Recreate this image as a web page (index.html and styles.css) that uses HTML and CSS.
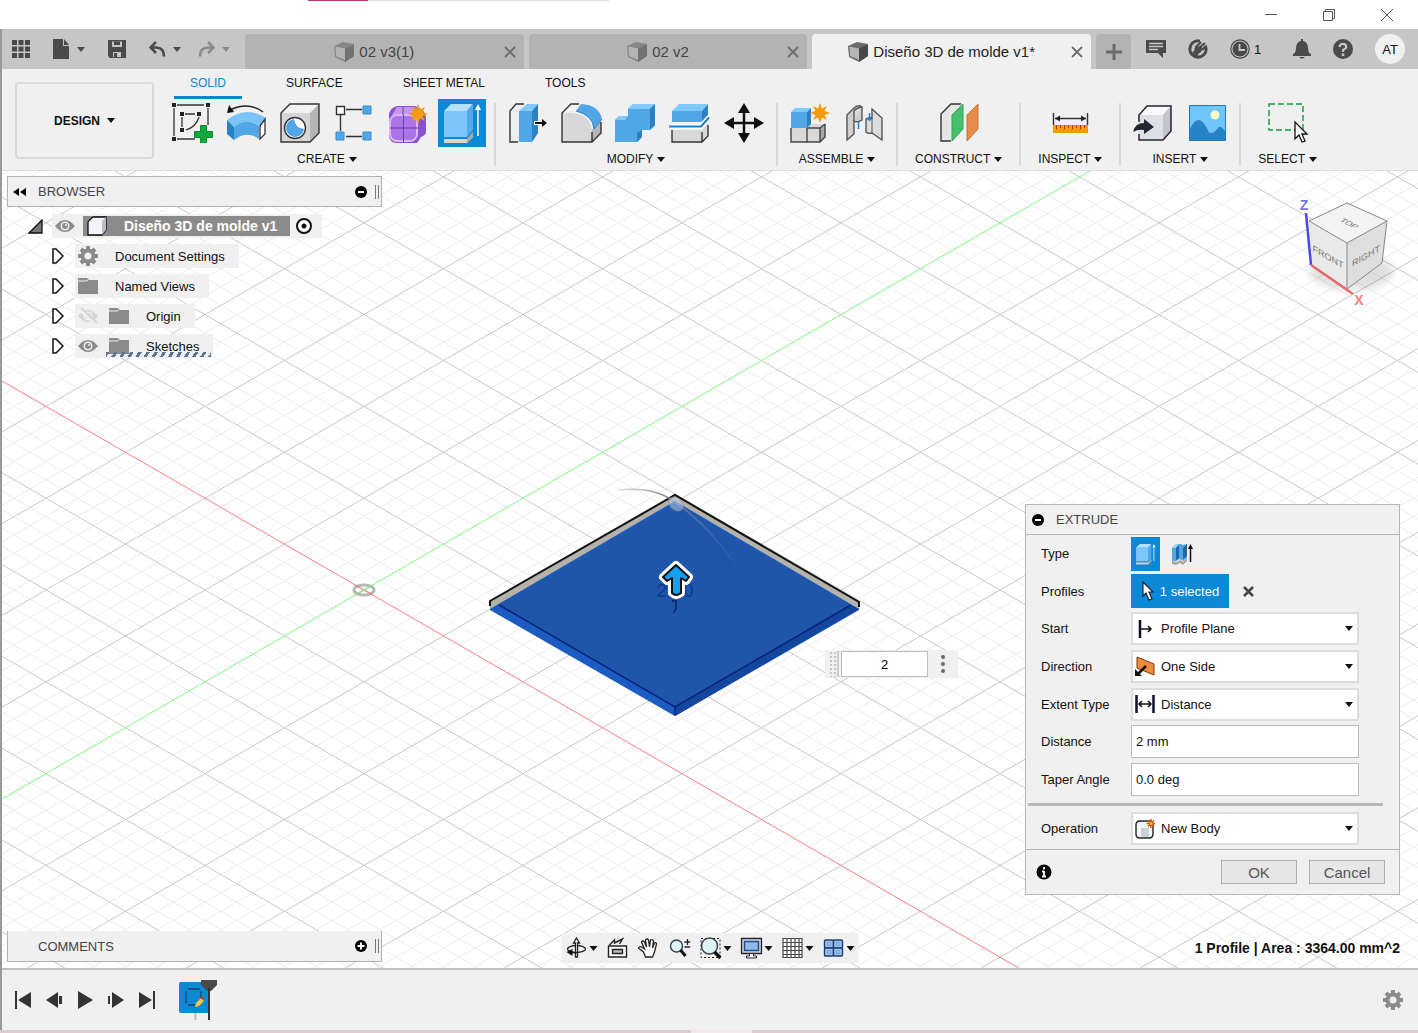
FILE: index.html
```html
<!DOCTYPE html>
<html lang="en">
  <head>
    <meta charset="utf-8">
    <meta name="viewport" content="width=device-width, initial-scale=1">
    <title>Diseño 3D de molde v1*</title>
    <link rel="stylesheet" href="styles.css">
  </head>
  <body>
    <svg class="defs" width="0" height="0">
      <symbol id="cube" viewBox="0 0 20 20">
        <path d="M0 4 9 0l11 2v12l-9 6L1 15z" fill="#6b6b6b"/>
        <path d="M1.500 4.500 11 6.500V18L2 14z" fill="#b4b4b4"/>
        <path d="m11 6.500 9-4V14l-9 6z" fill="#484848"/>
      </symbol>
      <symbol id="eye" viewBox="0 0 20 20">
        <path d="M0 10q10-12 20 0-10 12-20 0z" fill="#8b8b8b"/>
        <circle cx="10" cy="10" r="4.500" fill="#f0f0f0"/>
        <circle cx="10" cy="10" r="3" fill="#8b8b8b"/>
        <circle cx="11" cy="9" r="1" fill="#f0f0f0"/>
      </symbol>
      <symbol id="folder" viewBox="0 0 20 20">
        <path d="M0 2h9l2 2h9v14H0z" fill="#8b8b8b"/>
        <path d="M0 5h8l2-1" fill="none" stroke="#f0f0f0"/>
      </symbol>
      <symbol id="gear" viewBox="0 0 20 20">
        <path d="M10 0v20M0 10h20M3 3l14 14M17 3 3 17" stroke="#8b8b8b" stroke-width="4"/>
        <circle cx="10" cy="10" r="5.500" fill="none" stroke="#8b8b8b" stroke-width="4"/>
        <circle cx="10" cy="10" r="3.500" fill="#f0f0f0"/>
      </symbol>
      <symbol id="close" viewBox="0 0 12 12">
        <path d="m1 1 10 10M11 1 1 11" fill="none" stroke="#6e6e6e" stroke-width="1.800"/>
      </symbol>
      <symbol id="expand" viewBox="0 0 12 18">
        <path d="M1 2h3l7 7-7 7H1z" fill="#fff" stroke="#111" stroke-width="1.500"/>
      </symbol>
      <symbol id="star" viewBox="-10 -10 20 20">
        <path d="m0-10 2 5.500 5-2.500-2.500 5L10 0 4.500 2 7 7 2 4.500 0 10l-2-5.500L-7 7l2.500-5L-10 0l5.500-2L-7-7l5 2.500z" fill="#f59a0c"/>
      </symbol>
      <symbol id="extrude" viewBox="0 0 40 40">
        <path d="M2 36h23l6-7v5l-6 6H2z" fill="#d8d4cc"/>
        <path d="m25 40 6-6v-5l-6 7z" fill="#aaa69e"/>
        <path d="m2 8 7-7h22l-6 7z" fill="#b4e0ff"/>
        <path d="M2 8h23v26H2z" fill="#7cc6fb"/>
        <path d="m25 8 6-7v26l-6 7z" fill="#53a9e8"/>
        <path d="M36 33V5" stroke="#fff" stroke-width="1.500"/>
        <path d="m33 7 3-6 3 6z" fill="#fff"/>
      </symbol>
    </svg>

    <div class="titlebar">
      <div class="progress"><span></span></div>
      <button aria-label="Minimize"><svg width="12" height="12"><path d="M0 5.500h12" stroke="#555"/></svg></button>
      <button aria-label="Restore"><svg width="12" height="12"><path d="M.5 2.500h9v9h-9zM2.500 2V.500h9v9H10" fill="none" stroke="#555"/></svg></button>
      <button aria-label="Close"><svg width="12" height="12"><path d="m0 0 12 12M12 0 0 12" stroke="#555"/></svg></button>
    </div>

    <div class="app">
      <header class="appbar">
        <div class="quick">
          <button aria-label="Data panel"><svg width="18" height="18" fill="#4a4a4a"><path d="M0 0h5v5H0zM6.500 0h5v5h-5zM13 0h5v5h-5zM0 6.500h5v5H0zM6.500 6.500h5v5h-5zM13 6.500h5v5h-5zM0 13h5v5H0zM6.500 13h5v5h-5zM13 13h5v5h-5z"/></svg></button>
          <button class="menu" aria-label="File"><svg width="18" height="20" fill="#4a4a4a"><path d="M0 0h10v7h6v13H0z"/><path d="m11 0 5 6h-5z"/></svg><i class="caret"></i></button>
          <button aria-label="Save"><svg width="18" height="18"><path d="M0 0h18v18H2l-2-2z" fill="#4a4a4a"/><path d="M4 1.500h10V7H4zM5 12h8v5H5z" fill="#c6c6c6"/><path d="M6 1.500h6V5H6zM6 13h3v4H6z" fill="#4a4a4a"/></svg></button>
          <button class="menu" aria-label="Undo"><svg width="18" height="18" fill="none" stroke="#4a4a4a" stroke-width="2.500"><path d="M7 2 1.500 7.500 7 13M2 7.500h5q8 0 8 9"/></svg><i class="caret"></i></button>
          <button class="menu off" aria-label="Redo"><svg width="18" height="18" fill="none" stroke="#8a8a8a" stroke-width="2.500"><path d="m10 2 5.500 5.500L10 13M15 7.500h-5q-8 0-8 9"/></svg><i class="caret"></i></button>
        </div>
        <div class="docs">
          <div class="doc"><a href="#"><svg class="dim" width="20" height="20"><use href="#cube"/></svg>02 v3(1)</a><button aria-label="Close 02 v3(1)"><svg width="12" height="12"><use href="#close"/></svg></button></div>
          <div class="doc"><a href="#"><svg class="dim" width="20" height="20"><use href="#cube"/></svg>02 v2</a><button aria-label="Close 02 v2"><svg width="12" height="12"><use href="#close"/></svg></button></div>
          <div class="doc active"><a href="#"><svg width="20" height="20"><use href="#cube"/></svg>Diseño 3D de molde v1*</a><button aria-label="Close document"><svg width="12" height="12"><use href="#close"/></svg></button></div>
          <button class="new-doc" aria-label="New document"><svg width="16" height="16"><path d="M8 0v16M0 8h16" stroke="#6a6a6a" stroke-width="3"/></svg></button>
        </div>
        <div class="account">
          <button aria-label="Comments"><svg width="20" height="20"><path d="M0 1h20v13h-3v5l-5-5H0z" fill="#4a4a4a"/><path d="M3 4.500h14M3 7.500h14M3 10.500h9" stroke="#c6c6c6" stroke-width="1.500"/></svg></button>
          <button aria-label="Extensions"><svg width="20" height="20"><circle cx="10" cy="10" r="8.200" fill="none" stroke="#4a4a4a" stroke-width="3"/><path d="M12 0h5l3 4-3 3-5-3z" fill="#c6c6c6"/><path d="m8 8 5-5M11 9l6-5M13 11l5-3" stroke="#4a4a4a" stroke-width="2.200"/><path d="m7 7 7 1-1 5-3 2-4-1z" fill="#4a4a4a"/><path d="m6 12 3 5" stroke="#4a4a4a" stroke-width="4"/></svg></button>
          <button class="jobs" aria-label="Job status"><svg width="20" height="20"><circle cx="10" cy="10" r="9.200" fill="none" stroke="#4a4a4a" stroke-width="1.200"/><circle cx="10" cy="10" r="7.500" fill="#4a4a4a"/><path d="M9.500 5v6H15" fill="none" stroke="#c6c6c6" stroke-width="1.800"/></svg><span>1</span></button>
          <button aria-label="Notifications"><svg width="18" height="20" fill="#4a4a4a"><path d="M8 0h2v2q5 1 5 7 0 5 3 6v2H0v-2q3-1 3-6 0-6 5-7z"/><path d="M6 18h6q-3 3-6 0z"/></svg></button>
          <button aria-label="Help"><svg width="20" height="20"><circle cx="10" cy="10" r="10" fill="#4a4a4a"/><path d="M6.500 8Q7 4.800 10 4.800T13.300 8Q13.300 9.500 10 11v2" fill="none" stroke="#c6c6c6" stroke-width="2.200"/><path d="M8.800 14.500h2.500V17H8.800z" fill="#c6c6c6"/></svg></button>
          <button class="avatar">AT</button>
        </div>
      </header>

      <div class="toolbar">
        <button class="workspace">DESIGN<i class="caret"></i></button>
        <div class="ribbon">
          <nav class="tabs">
            <a href="#" class="active">SOLID</a>
            <a href="#">SURFACE</a>
            <a href="#">SHEET METAL</a>
            <a href="#">TOOLS</a>
          </nav>
          <div class="groups">
            <section class="group">
              <div class="icons">
                <button aria-label="Create sketch"><svg width="42" height="40"><path d="M6 2h27M3 5v28M6 36h18M37 5v17M14 11h10M11 14v10M28 14q-3 10-13 13" fill="none" stroke="#333" stroke-width="1.300"/><path d="M1 0h4v4H1zM35 0h4v4h-4zM1 34h4v4H1zM9 9h4v4H9zM26 9h4v4h-4zM9 25h4v4H9z" fill="#222"/><path d="M29.500 22.500h6v6h6v6h-6v6h-6v-6h-6v-6h6z" fill="#12a83c" stroke="#0b8a2e"/></svg></button>
                <button aria-label="Revolve"><svg width="40" height="40"><path d="M1 17Q20 2 40 15l-7 8q-13-9-25 1z" fill="#79c4f8"/><path d="m1 17 7 7v13l-7-6z" fill="#2b80c2"/><path d="M8 24q12-10 25-1v13q-12-9-25 1z" fill="#51a6e6"/><path d="m34 23 5-7v15l-5 5z" fill="#fff" stroke="#333" stroke-width="1.300"/><path d="M37 9Q22-2 4 7" fill="none" stroke="#222" stroke-width="1.500"/><path d="m1 10 2-8 5 7z" fill="#111"/></svg></button>
                <button aria-label="Hole"><svg width="42" height="42"><path d="m2 11 9-9h29l-9 9z" fill="#f2f2f2"/><path d="m31 11 9-9v29l-9 9z" fill="#b5b5b5"/><path d="M2 11h29v29H2z" fill="#d6d6d6"/><path d="m2 11 9-9h29v29l-9 9H2z" fill="none" stroke="#333" stroke-width="1.400"/><circle cx="16" cy="26" r="10.500" fill="#fff" stroke="#333" stroke-width="1.400"/><path d="M15 17q1 9 10 10a9 9 0 1 1-10-10z" fill="#51a6e6"/></svg></button>
                <button aria-label="Pattern"><svg width="40" height="40"><path d="M12 6.500h16M12 33.500h16M6.500 12v16" stroke="#333" stroke-width="1.400"/><path d="M2.500 3.500h8v8h-8z" fill="#fff" stroke="#333" stroke-width="1.400"/><path d="M29 3h8v8h-8zM2 29h8v8H2zM29 29h8v8h-8z" fill="#51a6e6" stroke="#3b8ccb"/></svg></button>
                <button aria-label="Create form"><svg width="40" height="40"><path d="M9 3h18q10 3 11 12v14q0 3-5 5l-4 6H8q-7-1-7-8V11q1-6 8-8z" fill="#8a52d0"/><path d="M9 4h18l3 8H4z" fill="#c496f5"/><rect x="2" y="12" width="27" height="26" rx="7" fill="#aa74e6" stroke="#d9b8fb" stroke-width="2"/><path d="M15.500 12v27M2 25h28M15 4v8" stroke="#6f3bb0" fill="none"/><use href="#star" x="20" y="1" width="20" height="20"/></svg></button>
                <button class="on" aria-label="Extrude"><svg width="40" height="42"><use href="#extrude" width="40" height="42"/></svg></button>
              </div>
              <button class="label">CREATE<i class="caret"></i></button>
            </section>
            <span class="divider"></span>
            <section class="group">
              <div class="icons">
                <button aria-label="Press pull"><svg width="40" height="42"><path d="m2 9 5-7h13L11 9v31H2z" fill="#eee"/><path d="M16 2H8L2 9v31h8" fill="none" stroke="#333" stroke-width="1.400"/><path d="m11 9 8-7h11l-6 7z" fill="#82caf9"/><path d="M11 9h13v31H11z" fill="#51a6e6"/><path d="m24 9 6-7v29l-6 9z" fill="#2b80c2"/><path d="M26 21h9" stroke="#fff" stroke-width="4"/><path d="M27 21h8" stroke="#111" stroke-width="2"/><path d="m34 17 5 4-5 4z" fill="#111"/></svg></button>
                <button aria-label="Fillet"><svg width="42" height="42"><path d="M1 11q28-2 30 17v12H1z" fill="#d8d8d8"/><path d="m1 11 9-9h9l-5 6z" fill="#f5f5f5"/><path d="m31 28 9-9v12l-9 9z" fill="#b5b5b5"/><path d="M18 2H10l-9 9v29h30l9-9V20M31 30v10" fill="none" stroke="#333" stroke-width="1.400"/><path d="m15 9 5-7q18 1 21 15l-8 10Q32 13 15 9z" fill="#51a6e6"/><path d="M15 9q17 4 18 18l8-10" fill="none" stroke="#2b80c2"/></svg></button>
                <button aria-label="Combine"><svg width="42" height="42"><path d="m0 18 4-4h9V7l5-5h22v21l-5 5h-8v7l-5 5H0z" fill="#51a6e6"/><path d="m13 7 5-5h22l-5 5zM0 18l4-4h9l-3 4z" fill="#82caf9"/><path d="m35 7 5-5v21l-5 5zM22 31l5-3v7l-5 5z" fill="#2b80c2"/></svg></button>
                <button aria-label="Split body"><svg width="42" height="42"><path d="m3 9 7-7h29l-6 7z" fill="#82caf9"/><path d="M3 9h30v11H3z" fill="#51a6e6"/><path d="m33 9 6-7v11l-6 7z" fill="#2b80c2"/><path d="M3 28h30l6-7v12l-6 7H3z" fill="#d8d8d8"/><path d="M3 28v12h30l6-6V23M33 30v10" fill="none" stroke="#333" stroke-width="1.400"/><path d="M1 24.500h31l8-9" fill="none" stroke="#fff" stroke-width="5"/><path d="M0 24.500h32l8-9" fill="none" stroke="#1c7fc8" stroke-width="2"/></svg></button>
                <button aria-label="Move"><svg width="40" height="42"><path d="M20 5v32M4 21h32" stroke="#111" stroke-width="2.500"/><path d="m20 1 6 10H14zM20 41l6-10H14zM0 21l10-6v12zM40 21l-10-6v12z" fill="#111"/></svg></button>
              </div>
              <button class="label">MODIFY<i class="caret"></i></button>
            </section>
            <span class="divider"></span>
            <section class="group">
              <div class="icons">
                <button aria-label="New component"><svg width="42" height="42"><path d="M2 26h16l4-4h14v13l-5 5H2z" fill="#d8d8d8"/><path d="m31 26 5-4v13l-5 5z" fill="#aaa"/><path d="M2 26v14h29l5-5V22M18 26v14M18 26h13v14M31 26l5-4" fill="none" stroke="#444" stroke-width="1.400"/><path d="m2 10 4-4h16l-4 4z" fill="#82caf9"/><path d="M2 10h16v16H2z" fill="#51a6e6"/><path d="m18 10 4-4v16l-4 4z" fill="#2b80c2"/><use href="#star" x="21" y="1" width="20" height="20"/></svg></button>
                <button aria-label="Joint"><svg width="40" height="42"><path d="M3 13 10 6q4-4 8-1v13q-5 3-8 1v13l-7 6z" fill="#cfcfcf" stroke="#555" stroke-width="1.400"/><path d="M10 19V9q2-3 8-4M22 17q2-2 6-1V7l10 9v22l-10-7q-4 1-6-1z" fill="#dcdcdc" stroke="#555" stroke-width="1.400"/><path d="M28 16v15" stroke="#555"/><path d="M14.500 19v8M25.500 11v8M23 17h5" stroke="#1c7fc8" stroke-width="1.500"/></svg></button>
              </div>
              <button class="label">ASSEMBLE<i class="caret"></i></button>
            </section>
            <span class="divider"></span>
            <section class="group">
              <div class="icons">
                <button aria-label="Offset plane"><svg width="40" height="42"><path d="M2 12 12 2h12L13 13v26H2z" fill="#e6e6e6"/><path d="M22 2H12L2 12v27h10" fill="none" stroke="#333" stroke-width="1.400"/><path d="M13 13 24 2v25L13 39z" fill="#45c06c" stroke="#2da455"/><path d="M28 13 39 2v25L28 39z" fill="#e58b4c" stroke="#ca7034"/></svg></button>
              </div>
              <button class="label">CONSTRUCT<i class="caret"></i></button>
            </section>
            <span class="divider"></span>
            <section class="group">
              <div class="icons">
                <button aria-label="Measure"><svg width="40" height="40"><path d="M3.500 10v12M37.500 10v12M5 15.500h31" stroke="#333" stroke-width="1.400"/><path d="m5 15.500 5-3v6zM36 15.500l-5-3v6z" fill="#222"/><path d="M3 22h35v8H3z" fill="#f59a0c"/><path d="M6.500 22v4M10.500 22v3M14.500 22v4M18.500 22v3M22.500 22v4M26.500 22v3M30.500 22v4M34.500 22v3" stroke="#7a4a00"/></svg></button>
              </div>
              <button class="label">INSPECT<i class="caret"></i></button>
            </section>
            <span class="divider"></span>
            <section class="group">
              <div class="icons">
                <button aria-label="Insert derive"><svg width="42" height="40"><path d="m7 12 8-9h24v25l-8 9H7z" fill="#dfe0e6"/><path d="m7 12 8-9h24l-8 9z" fill="#f9f9fb"/><path d="m31 12 8-9v25l-8 9z" fill="#c2c3cb"/><path d="M7 19v-7l8-9h24v25l-8 9H7v-6" fill="none" stroke="#222631" stroke-width="1.500"/><path d="M1 29q2-9 11-9v-4l10 8-10 7v-4q-6-1-11 2z" fill="#222631"/></svg></button>
                <button aria-label="Insert canvas"><svg width="40" height="40"><path d="M2.500 2.500h36v35h-36z" fill="#72c5fb"/><path d="M3 26q4-9 9-9 4 0 10 12 2 2 5 0l5-5q2-1 6 4v9H3z" fill="#2583c6"/><circle cx="28" cy="12" r="4.500" fill="#fffbd0"/><path d="M2.500 2.500h36v35h-36z" fill="none" stroke="#1d77ba"/></svg></button>
              </div>
              <button class="label">INSERT<i class="caret"></i></button>
            </section>
            <span class="divider"></span>
            <section class="group">
              <div class="icons">
                <button aria-label="Select"><svg width="42" height="42"><path d="M2 2h34v26H2z" fill="none" stroke="#0e9b37" stroke-width="1.400" stroke-dasharray="6 3"/><path d="M28 20v17l4-4 3 7 3-1-3-7h5z" fill="#fff" stroke="#111" stroke-width="1.300"/></svg></button>
              </div>
              <button class="label">SELECT<i class="caret"></i></button>
            </section>
          </div>
        </div>
      </div>

      <main class="viewport">
        <svg class="scene">
          <g transform="translate(362 419)">
            <path id="grid-minor"/>
            <path id="grid-major"/>
            <ellipse rx="10" ry="5" fill="none" stroke="#888" stroke-opacity=".6" stroke-width="3"/>
            <path d="M-9-5 9 5M-9 5 9-5" stroke="#999" stroke-opacity=".5" stroke-width="2"/>
            <path id="axis-x"/>
            <path id="axis-y"/>
          </g>
          <g transform="translate(673 323)">
            <path d="m0 0-185 107v8L0 222l184-107v-8z" fill="#b5b2aa"/>
            <path d="M-185 115 0 7l184 108v1L0 222l-185-106z" fill="#1c5bc2"/>
            <path d="M-176 111 0 9l176 102L0 213z" fill="#1f56aa"/>
            <path d="M0 213v9l184-107-8-4z" fill="#14469d"/>
            <path d="M-176 111 0 213l176-102M0 213v8" fill="none" stroke="#04237a" stroke-width="1.500"/>
            <path d="M-185 112v-5L0 1l184 107v5" fill="none" stroke="#111" stroke-width="2"/>
            <path d="M-57-4q36-4 57 12 40 28 70 78" fill="none" stroke="url(#fade)" stroke-width="1.500"/>
            <ellipse cx="1" cy="10" rx="8" ry="6" transform="rotate(40 1 10)" fill="#b9d0ee" fill-opacity=".5" stroke="#888" stroke-opacity=".6"/>
            <text x="0" y="103" text-anchor="middle" class="dim-text">2.00</text>
            <path d="M-3 107h4v8l-3 4" fill="none" stroke="#0d2f80" stroke-width="2"/>
            <path d="m1 71 13 12-3 4-5-3v15q-5 4-9 0V84l-5 3-4-4z" fill="#fff" stroke="#fff" stroke-width="8" stroke-linejoin="round"/>
            <path d="m1 71 13 12-3 4-5-3v15q-5 4-9 0V84l-5 3-4-4z" fill="#12a1ee" stroke="#111" stroke-width="2" stroke-linejoin="round"/>
          </g>
          <linearGradient id="fade">
            <stop offset="0" stop-color="#999" stop-opacity=".3"/>
            <stop offset=".4" stop-color="#888"/>
            <stop offset="1" stop-color="#4a77bb" stop-opacity="0"/>
          </linearGradient>
        </svg>

        <svg class="viewcube" width="110" height="122">
          <ellipse cx="62" cy="82" rx="42" ry="18" fill="#000" opacity=".12" class="soft"/>
          <path d="m57 13 40 18-40 22-38-22z" fill="#f3f3f3"/>
          <path d="m19 31 38 22v46L22 75z" fill="#e9e9e9"/>
          <path d="m97 31-40 22v46l35-26z" fill="#dedede"/>
          <path d="m57 13 40 18-40 22-38-22zM57 53v46l35-26 5-42M57 99 22 75" fill="none" stroke="#888"/>
          <path d="m16 23 5 52" stroke="#4a48e0" stroke-width="2.500"/>
          <path d="m21 75 42 29" stroke="#ea6868" stroke-width="2.500"/>
          <text transform="translate(57 35) matrix(.87 .45 -.7 .5 0 0)">TOP</text>
          <text transform="translate(38 70) skewY(30)">FRONT</text>
          <text transform="translate(76 69) skewY(-30)">RIGHT</text>
          <text x="14" y="20" class="axis z">Z</text>
          <text x="69" y="115" class="axis x">X</text>
        </svg>

        <div class="side">
          <div>
            <div class="panel">
              <button aria-label="Collapse"><svg width="13" height="8"><path d="M6 0v8L0 4zM13 0v8L7 4z"/></svg></button>
              <h2>BROWSER</h2>
              <button aria-label="Hide browser"><svg width="12" height="12"><circle cx="6" cy="6" r="6"/><path d="M3 6h6" stroke="#fff" stroke-width="2"/></svg></button>
              <span class="grip"></span>
            </div>
            <ul class="tree">
              <li class="root">
                <svg width="15" height="15"><path d="M1 14 14 1v13z" fill="#777" stroke="#111" stroke-width="1.300"/></svg>
                <span class="node">
                  <svg width="20" height="20"><use href="#eye"/></svg>
                  <b><svg width="20" height="20"><path d="M1 6q1-2 5-5h13v13l-4 5H1z" fill="#f3f4f8" stroke="#111" stroke-width="1.300"/><path d="m15 5 4-4v13l-4 5z" fill="#b9bcc6"/></svg>Diseño 3D de molde v1</b>
                  <input type="radio" name="active" aria-label="Activate component" checked>
                </span>
              </li>
              <li>
                <svg width="12" height="18"><use href="#expand"/></svg>
                <span class="node"><svg width="20" height="20"><use href="#gear"/></svg><span>Document Settings</span></span>
              </li>
              <li>
                <svg width="12" height="18"><use href="#expand"/></svg>
                <span class="node"><svg width="20" height="20"><use href="#folder"/></svg><span>Named Views</span></span>
              </li>
              <li>
                <svg width="12" height="18"><use href="#expand"/></svg>
                <span class="node"><svg width="20" height="20" class="hidden-eye"><use href="#eye"/><path d="m2 3 16 15" stroke="#f0f0f0" stroke-width="4"/><path d="m3 2 16 15" stroke="#8b8b8b" stroke-width="2"/></svg><svg class="second" width="20" height="20"><use href="#folder"/></svg><span>Origin</span></span>
              </li>
              <li>
                <svg width="12" height="18"><use href="#expand"/></svg>
                <span class="node hatched"><svg width="20" height="20"><use href="#eye"/></svg><svg class="second" width="20" height="20"><use href="#folder"/></svg><span>Sketches</span></span>
              </li>
            </ul>
          </div>
          <div class="panel comments">
            <h2>COMMENTS</h2>
            <button aria-label="Show comments"><svg width="12" height="12"><circle cx="6" cy="6" r="6"/><path d="M2.500 6h7M6 2.500v7" stroke="#fff" stroke-width="2"/></svg></button>
            <span class="grip"></span>
          </div>
        </div>

        <div class="value-box">
          <span class="dots"></span>
          <input type="text" value="2" aria-label="Distance value">
          <button aria-label="More"><svg width="4" height="18" fill="#666"><circle cx="2" cy="2" r="2"/><circle cx="2" cy="9" r="2"/><circle cx="2" cy="16" r="2"/></svg></button>
        </div>

        <form class="dialog">
          <header>
            <svg width="12" height="12"><circle cx="6" cy="6" r="6"/><path d="M3 6h6" stroke="#fff" stroke-width="2"/></svg>
            <h2>EXTRUDE</h2>
          </header>
          <div class="rows">
            <div class="row">
              <span>Type</span>
              <div class="field">
                <button type="button" class="type on" aria-label="Extrude"><svg width="21" height="22"><use href="#extrude" width="21" height="22"/></svg></button>
                <button type="button" class="type" aria-label="Thin extrude"><svg width="22" height="22"><path d="m1 5 4-4h5l2 1 4-1v14l-4 3-3-2-4 2H1z" fill="#51a6e6"/><path d="m1 5 4-4h3L5 5z" fill="#9ad3fa"/><path d="M5 5v12l3-2V2zM12 5v11l4-3V1z" fill="#2068a5"/><path d="m1 18 5 1 3-2 3 2 4-4v3l-4 4-3-2-4 2-4-1z" fill="#aaa69e"/><path d="M19.500 19V4" stroke="#111" stroke-width="1.500"/><path d="m17 6 2.500-5L22 6z"/></svg></button>
              </div>
            </div>
            <div class="row">
              <span>Profiles</span>
              <div class="field">
                <button type="button" class="pick"><svg width="14" height="20"><path d="M2 1v14l3-3 3 7 3-1-3-7h4z" fill="#fff" stroke="#223" stroke-width="1.200"/></svg>1 selected</button>
                <button type="button" class="clear" aria-label="Clear selection"><svg width="11" height="11"><path d="m1 1 9 9M10 1l-9 9" stroke="#444" stroke-width="2.500"/></svg></button>
              </div>
            </div>
            <div class="row">
              <label for="start">Start</label>
              <div class="field select">
                <svg width="20" height="20"><path d="M5 1v18" stroke="#0a1030" stroke-width="2.500"/><path d="M6 10h10M13 7l3 3-3 3" fill="none" stroke="#111" stroke-width="1.500"/></svg>
                <select id="start"><option>Profile Plane</option></select>
              </div>
            </div>
            <div class="row">
              <label for="direction">Direction</label>
              <div class="field select">
                <svg width="20" height="20"><path d="m2 1 17 7v11L2 12z" fill="#f08a3c" stroke="#7a3a10"/><path d="m11 10-8 8" stroke="#111" stroke-width="2.500"/><path d="M0 13v7h7z" fill="#111"/></svg>
                <select id="direction"><option>One Side</option></select>
              </div>
            </div>
            <div class="row">
              <label for="extent">Extent Type</label>
              <div class="field select">
                <svg width="20" height="20"><path d="M1.500 1v18M18.500 1v18" stroke="#0a1030" stroke-width="2.500"/><path d="M4 10h12M7 7l-3 3 3 3M13 7l3 3-3 3" fill="none" stroke="#111" stroke-width="1.500"/></svg>
                <select id="extent"><option>Distance</option></select>
              </div>
            </div>
            <div class="row">
              <label for="distance">Distance</label>
              <div class="field"><input type="text" id="distance" value="2 mm"></div>
            </div>
            <div class="row">
              <label for="taper">Taper Angle</label>
              <div class="field"><input type="text" id="taper" value="0.0 deg"></div>
            </div>
          </div>
          <hr>
          <div class="row operation">
            <label for="operation">Operation</label>
            <div class="field select">
              <svg width="20" height="20"><path d="M1 6q0-4 4-4h9q4 0 4 4v9q0 4-4 4H5q-4 0-4-4z" fill="#f4f5f8" stroke="#222" stroke-width="1.400"/><path d="M6 9h8v9H6z" fill="#cdd0da"/><path d="M16 0v9M11.500 4.500h9M13 1.500l6 6M19 1.500l-6 6" stroke="#d8500c" stroke-width="1.500"/><circle cx="16" cy="4.500" r="1.500" fill="#ffc21c"/></svg>
              <select id="operation"><option>New Body</option></select>
            </div>
          </div>
          <footer>
            <svg width="16" height="16"><circle cx="8" cy="8" r="7.500"/><path d="M8 3v2.500M8 7v6M6 7.500h2M6 12.500h4" stroke="#fff" stroke-width="1.800"/></svg>
            <button type="button">OK</button>
            <button type="button">Cancel</button>
          </footer>
        </form>

        <div class="navbar">
          <button aria-label="Orbit"><svg width="22" height="22" fill="none" stroke="#222" stroke-width="1.300"><ellipse cx="11" cy="12" rx="9" ry="3.500"/><path d="M10 20V6H8l3-5 3 5h-2v14z" fill="#fff"/><path d="M3 14.500q4 2 9 1"/><path d="m7 12-6 3 6 4z" fill="#111" stroke="none"/></svg><i class="caret"></i></button>
          <button aria-label="Look at"><svg width="22" height="22" fill="none" stroke="#222" stroke-width="1.400"><path d="M2 9h18v11H2z" fill="#fff"/><path d="M6 12.500h10v4H6z" fill="#bbb"/><path d="m3 8 5-5v3l8-4-3 5"/></svg></button>
          <button aria-label="Pan"><svg width="22" height="22"><path d="m8 20-2-5-5-4q1-2 3-1l3 2-3-7q1-2 3 0l2 5-1-7q2-2 3 0l1 7 1-7q2-1 3 1l-1 7 2-5q2-1 2 1l-2 8-2 5z" fill="#fff" stroke="#222" stroke-width="1.300"/></svg></button>
          <button aria-label="Zoom"><svg width="22" height="22"><circle cx="8" cy="9" r="6" fill="#dff2f5" stroke="#345" stroke-width="1.500"/><path d="m12 13 5 6" stroke="#111" stroke-width="3"/><path d="M16 5h6M19 2v6M16 10h6" stroke="#222" stroke-width="1.300"/></svg></button>
          <button aria-label="Fit"><svg width="22" height="22"><path d="M1.500 1.500h19v19h-19z" fill="none" stroke="#222" stroke-dasharray="2 2"/><circle cx="10" cy="9" r="8" fill="#dff2f0" stroke="#345" stroke-width="1.500"/><path d="m15 15 6 6" stroke="#111" stroke-width="3.500"/></svg><i class="caret"></i></button>
          <button aria-label="Display settings"><svg width="22" height="22"><path d="M1 1.500h20v15H1z" fill="#ddd" stroke="#223" stroke-width="1.500"/><path d="M4 4.500h14v9H4z" fill="#8fb9e8" stroke="#1d4b8c" stroke-width="1.500"/><path d="M9 17v2H6v2h10v-2h-3v-2" fill="#fff" stroke="#223"/></svg><i class="caret"></i></button>
          <button aria-label="Grid and snaps"><svg width="22" height="22"><path d="M1.500 1.500h19v19h-19zM5.500 1v20M9.500 1v20M13.500 1v20M17.500 1v20M1 5.500h20M1 9.500h20M1 13.500h20M1 17.500h20" fill="#fff" stroke="#444" stroke-width="1.200"/></svg><i class="caret"></i></button>
          <button aria-label="Viewports"><svg width="22" height="22" fill="#9bc0ea" stroke="#1f3f73" stroke-width="1.400"><rect x="2" y="3" width="9" height="8" rx="1"/><rect x="11" y="3" width="9" height="8" rx="1"/><rect x="2" y="11" width="9" height="8" rx="1"/><rect x="11" y="11" width="9" height="8" rx="1"/><path d="M5 5.500h3v3H5zM14 5.500h3v3h-3zM5 13.500h3v3H5zM14 13.500h3v3h-3z" stroke="#7da5d8" stroke-width="1"/></svg><i class="caret"></i></button>
        </div>

        <p class="status">1 Profile | Area : 3364.00 mm^2</p>
      </main>

      <footer class="timeline">
        <button aria-label="Go to start"><svg width="18" height="18" fill="#333"><path d="M1 0h2v18H1zM17 1v16L4 9z"/></svg></button>
        <button aria-label="Step back"><svg width="18" height="18" fill="#333"><path d="M13 1v16L1 9zM14 5h3v8h-3z"/></svg></button>
        <button aria-label="Play"><svg width="18" height="18" fill="#333"><path d="m2 0 15 9-15 9z"/></svg></button>
        <button aria-label="Step forward"><svg width="18" height="18" fill="#333"><path d="M1 5h2v8H1zM5 1l12 8-12 8z"/></svg></button>
        <button aria-label="Go to end"><svg width="18" height="18" fill="#333"><path d="m1 1 13 8-13 8zM15 0h2v18h-2z"/></svg></button>
        <button class="feature" aria-label="Sketch1"><svg width="40" height="40"><path d="M16.500 32v8" stroke="#bbb" stroke-width="2"/><rect y="2" width="30" height="31" rx="2" fill="#0a89d6"/><path d="M9 9h12M7 11v12M9 25h8M22 11v8" stroke="#17405f" stroke-width="1.300"/><path d="m16 27 1-4 5-5 3 3-5 5z" fill="#f7c948"/><path d="m21 18 2-2 2 1v3z" fill="#d33"/><path d="M22 0h16v5l-6 6h-4l-6-6z" fill="#4a4a4a"/><path d="M30 8v32" stroke="#333" stroke-width="2"/></svg></button>
        <button class="settings" aria-label="Timeline settings"><svg width="20" height="20"><use href="#gear"/></svg></button>
      </footer>
    </div>
    <div class="scrollstrip"><span></span></div>

    <script>
     (function () {
         'use strict';

         // half width and half height of one major grid cell, 5 minor cells in each
         var cellX = 79.5,
             cellY = 45.9,
             reach = 40;

         function line (offset, dir) {
             var x = cellX * reach,
                 y = cellY * reach * dir;
             return 'M' + -x + ' ' + (offset - y) + 'L' + x + ' ' + (offset + y);
         }

         function drawGrid () {
             var minor = '',
                 major = '',
                 i, path;
             for (i = -150; i <= 150; i++) {
                 if (i === 0) { continue; }
                 path = line(i * cellY * 2 / 5, 1) + line(i * cellY * 2 / 5, -1);
                 if (i % 5) {
                     minor += path;
                 } else {
                     major += path;
                 }
             }
             document.getElementById('grid-minor').setAttribute('d', minor);
             document.getElementById('grid-major').setAttribute('d', major);
             document.getElementById('axis-x').setAttribute('d', line(0, 1));
             document.getElementById('axis-y').setAttribute('d', line(0, -1));
         }

         drawGrid();
     }());
    </script>
  </body>
</html>
```
FILE: styles.css
```css
* {
    box-sizing: border-box;
}

body {
    margin: 0;
    height: 100vh;
    display: flex;
    flex-direction: column;
    overflow: hidden;
    background: #fff;
    color: #111;
    font-family: "Liberation Sans", Arial, sans-serif;
    font-size: 13px;
}

button {
    display: flex;
    align-items: center;
    justify-content: center;
    padding: 0;
    border: 0;
    background: none;
    color: inherit;
    font: inherit;
}

svg {
    display: block;
    flex: none;
}

a {
    color: inherit;
    text-decoration: none;
}

h2 {
    margin: 0;
    color: #444;
    font-size: 13px;
    font-weight: 400;
}

.defs {
    position: absolute;
}

.caret {
    flex: none;
    border: 4px solid transparent;
    border-top: 5px solid currentColor;
    border-bottom: 0;
}

/* window frame */

.titlebar {
    position: relative;
    flex: none;
    display: flex;
    justify-content: flex-end;
    height: 29px;
    padding-right: 2px;
}

.titlebar button {
    width: 58px;
}

.progress {
    position: absolute;
    top: 0;
    left: 308px;
    width: 301px;
    height: 1px;
    background: #ddd;
}

.progress span {
    display: block;
    width: 60px;
    height: 1px;
    background: #b03a6e;
}

.app {
    flex: 1;
    display: flex;
    flex-direction: column;
    min-height: 0;
    border-left: 2px solid #999;
}

.appbar {
    flex: none;
    display: flex;
    height: 40px;
    background: #c6c6c6;
}

.quick {
    display: flex;
    align-items: center;
    gap: 23px;
    width: 243px;
    padding-left: 10px;
    color: #4a4a4a;
}

.quick .menu {
    gap: 6px;
}

.quick .menu + .menu {
    margin-left: -6px;
}

.quick .off {
    color: #8a8a8a;
}

.docs {
    flex: 1;
    display: flex;
    align-items: flex-end;
    gap: 5px;
    font-size: 15px;
}

.doc {
    flex: 1;
    display: flex;
    align-items: center;
    height: 35px;
    padding-right: 8px;
    border-radius: 4px 4px 0 0;
    background: #b3b3b3;
    color: #444;
}

.doc a {
    flex: 1;
    display: flex;
    justify-content: center;
    align-items: center;
    gap: 5px;
    white-space: nowrap;
}

.doc .dim {
    opacity: .6;
}

.doc.active {
    background: #f0f0f0;
}

.doc.active a {
    color: #222;
}

.new-doc {
    width: 35px;
    height: 35px;
    border-radius: 4px 4px 0 0;
    background: #b3b3b3;
}

.account {
    display: flex;
    align-items: center;
    justify-content: space-between;
    width: 287px;
    padding: 0 13px 0 15px;
}

.account .jobs {
    gap: 4px;
    margin-right: 10px;
}

.avatar {
    width: 30px;
    height: 30px;
    border-radius: 50%;
    background: #f0f0f0;
}

/* ribbon */

.toolbar {
    flex: none;
    display: flex;
    border-bottom: 1px solid #ddd;
    background: #f0f0f0;
    font-size: 12px;
}

.workspace {
    gap: 7px;
    width: 139px;
    height: 77px;
    margin: 13px 6px 0 13px;
    border: 2px solid #d9d9d9;
    border-radius: 4px;
    font-weight: 700;
}

.tabs {
    display: flex;
    gap: 28px;
    height: 30px;
    padding-left: 14px;
}

.tabs a {
    padding: 0 16px;
    border-bottom: 3px solid transparent;
    line-height: 28px;
}

.tabs .active {
    border-color: #0a85d1;
    color: #0a85d1;
}

.groups {
    display: flex;
    height: 71px;
}

.group {
    padding: 0 8px;
}

.icons {
    display: flex;
    justify-content: center;
    gap: 6px;
}

.icons button {
    width: 48px;
    height: 48px;
}

.icons .on {
    background: #0a89d6;
}

.label {
    gap: 4px;
    margin: 5px auto 0;
    padding: 0 9px;
}

.divider {
    width: 2px;
    margin: 4px 0;
    background: #d9d9d9;
}

/* 3D view */

.viewport {
    position: relative;
    flex: 1;
    min-height: 0;
    overflow: hidden;
    background: #fff;
}

.scene {
    position: absolute;
    width: 100%;
    height: 100%;
}

#grid-minor {
    stroke: #ececec;
}

#grid-major {
    stroke: #c8c8c8;
}

#axis-x {
    stroke: #ff7d7d;
}

#axis-y {
    stroke: #7dfa7d;
}

.dim-text {
    fill: #0d3a94;
    font-size: 19px;
}

.viewcube {
    position: absolute;
    top: 19px;
    right: 18px;
    fill: #777;
    font-size: 9px;
    text-anchor: middle;
}

.viewcube .soft {
    filter: blur(4px);
}

.axis {
    font-size: 14px;
    font-weight: 700;
}

.axis.z {
    fill: #7775e8;
}

.axis.x {
    fill: #f28080;
}

.side {
    position: absolute;
    top: 5px;
    bottom: 6px;
    left: 5px;
    display: flex;
    flex-direction: column;
    justify-content: space-between;
    width: 375px;
}

.panel {
    display: flex;
    align-items: center;
    height: 31px;
    padding: 0 2px 0 5px;
    border: 1px solid #b0b0b0;
    background: #f0f0f0;
}

.panel h2 {
    flex: 1;
    margin-left: 12px;
}

.comments {
    border-top: 0;
}

.comments h2 {
    margin-left: 25px;
}

.grip {
    width: 4px;
    height: 14px;
    margin-left: 8px;
    border: 1px solid #777;
    border-width: 0 1px;
}

.tree {
    margin: 4px 0 0;
    padding: 0 0 0 45px;
    list-style: none;
}

.tree li {
    display: flex;
    align-items: center;
    gap: 11px;
    height: 30px;
}

.tree .root {
    gap: 9px;
    margin-left: -24px;
}

.node {
    display: flex;
    align-items: center;
    height: 24px;
    padding: 0 14px 0 3px;
    background: #f0f0f0;
}

.node > span {
    margin-left: 17px;
}

.second {
    margin-left: 11px;
}

.root .node {
    padding-right: 10px;
}

.root b {
    display: flex;
    align-items: center;
    gap: 17px;
    height: 20px;
    margin: 0 6px 0 8px;
    padding: 0 13px 0 4px;
    background: #8b8b8b;
    color: #fff;
    font-size: 14px;
}

.root input {
    appearance: none;
    width: 16px;
    height: 16px;
    margin: 0;
    border: 2px solid #111;
    border-radius: 50%;
    background: radial-gradient(#111 2px, #fff 3px);
}

.hidden-eye {
    opacity: .25;
}

.hatched {
    position: relative;
}

.hatched::after {
    position: absolute;
    right: 2px;
    bottom: 1px;
    left: 31px;
    height: 5px;
    background: repeating-linear-gradient(120deg, #5f7497 0 3px, transparent 3px 7px);
    content: "";
}

.value-box {
    position: absolute;
    top: 479px;
    left: 823px;
    display: flex;
    align-items: center;
    height: 28px;
    background: #f0f0f0;
}

.dots {
    width: 10px;
    height: 26px;
    margin: 0 2px 0 4px;
    border-right: 2px solid #ccc;
    background: radial-gradient(#c4c4c4 1px, transparent 1px) 0 0 / 4px 4px;
}

.value-box input {
    width: 87px;
    height: 26px;
    border: 1px solid #bbb;
    background: #fff;
    font: inherit;
    text-align: center;
}

.value-box button {
    width: 30px;
}

/* extrude dialog */

.dialog {
    position: absolute;
    top: 333px;
    right: 18px;
    width: 375px;
    border: 1px solid #b5b5b5;
    background: #f0f0f0;
}

.dialog header {
    display: flex;
    align-items: center;
    gap: 12px;
    height: 30px;
    padding-left: 6px;
    border-bottom: 1px solid #b5b5b5;
}

.rows {
    display: grid;
    grid-auto-rows: 1fr;
    min-height: 263px;
}

.row {
    display: grid;
    grid-template-columns: 90px 1fr;
    align-items: center;
    padding: 0 40px 0 15px;
}

.field {
    display: flex;
    align-items: center;
    height: 33px;
}

.field input,
.field select {
    flex: 1;
    height: 33px;
    margin: 0;
    padding: 0 4px;
    border: 1px solid #bbb;
    border-radius: 0;
    background: #fff;
    color: #111;
    font: inherit;
}

.select {
    position: relative;
}

.select svg {
    position: absolute;
    left: 4px;
}

.field select {
    appearance: none;
    padding-left: 28px;
    border: 2px solid #ddd;
}

.select::after {
    position: absolute;
    right: 6px;
    border: 4px solid transparent;
    border-top: 5px solid #111;
    border-bottom: 0;
    content: "";
}

.type {
    width: 29px;
    height: 34px;
    margin-right: 7px;
}

.type.on {
    background: #0a89d6;
}

.pick {
    gap: 5px;
    width: 98px;
    height: 34px;
    background: #0a89d6;
    color: #fff;
}

.clear {
    margin-left: 14px;
}

.dialog hr {
    height: 3px;
    margin: 5px 16px 4px 2px;
    border: 0;
    background: #b8b8b8;
}

.operation {
    height: 39px;
    padding-bottom: 2px;
}

.dialog footer {
    display: flex;
    align-items: center;
    gap: 12px;
    height: 45px;
    padding: 0 14px 0 10px;
    border-top: 1px solid #b5b5b5;
}

.dialog footer svg {
    margin-right: auto;
}

.dialog footer button {
    width: 76px;
    height: 24px;
    border: 1px solid #adadad;
    background: #e6e6e6;
    color: #555;
    font-size: 15px;
}

.navbar {
    position: absolute;
    bottom: 5px;
    left: 50%;
    display: flex;
    gap: 9px;
    height: 30px;
    padding: 0 4px;
    background: #f0f0f0;
    transform: translateX(-50%);
}

.navbar button {
    gap: 2px;
}

.status {
    position: absolute;
    right: 18px;
    bottom: 12px;
    margin: 0;
    font-size: 14px;
    font-weight: 700;
}

/* timeline */

.timeline {
    flex: none;
    display: flex;
    align-items: center;
    height: 62px;
    padding: 0 15px 0 5px;
    border-top: 2px solid #c0c0c0;
    background: #f0f0f0;
}

.timeline button {
    width: 31px;
    height: 40px;
}

.timeline .feature {
    width: 40px;
    margin-left: 17px;
}

.timeline .settings {
    width: 20px;
    margin-left: auto;
}

.scrollstrip {
    flex: none;
    display: flex;
    justify-content: center;
    height: 3px;
    padding-left: 25px;
    background: #dfccd3;
}

.scrollstrip span {
    width: 61px;
    background: #f2e9ec;
}
```
